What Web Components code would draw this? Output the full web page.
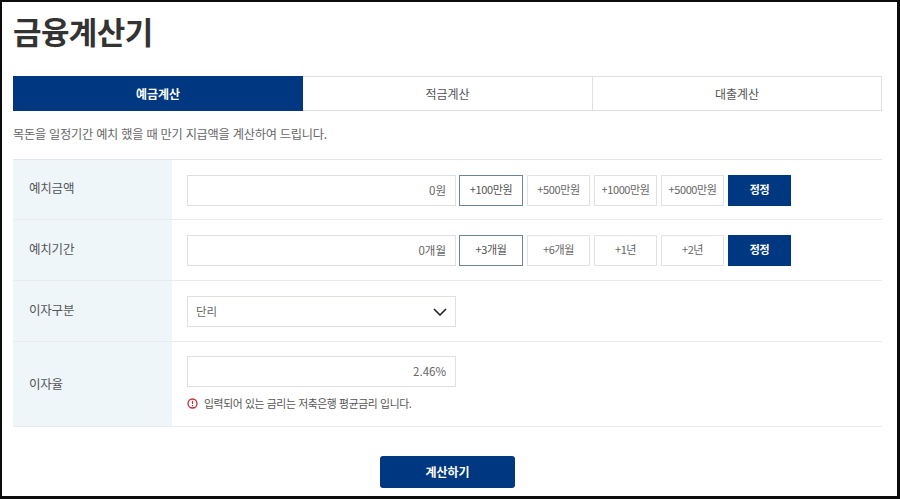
<!DOCTYPE html>
<html lang="ko"><head><meta charset="utf-8"><title>금융계산기</title>
<style>
html,body{margin:0;padding:0;background:#fff}
body{font-family:"Noto Sans CJK KR","Noto Sans",sans-serif}
</style></head><body>
<calc-page>
<calc-tabs slot="tabs"></calc-tabs>
<p slot="intro">목돈을 일정기간 예치 했을 때 만기 지급액을 계산하여 드립니다.</p>
<calc-row label="예치금액" h="59"><calc-input tight>0원</calc-input><calc-chip active>+100만원</calc-chip><calc-chip>+500만원</calc-chip><calc-chip>+1000만원</calc-chip><calc-chip>+5000만원</calc-chip><calc-chip primary>정정</calc-chip></calc-row>
<calc-row label="예치기간" h="60"><calc-input tight>0개월</calc-input><calc-chip active>+3개월</calc-chip><calc-chip>+6개월</calc-chip><calc-chip>+1년</calc-chip><calc-chip>+2년</calc-chip><calc-chip primary>정정</calc-chip></calc-row>
<calc-row label="이자구분" h="60"><calc-select>단리</calc-select></calc-row>
<calc-row label="이자율" h="84" stack><calc-input>2.46%</calc-input><calc-note>입력되어 있는 금리는 저축은행 평균금리 입니다.</calc-note></calc-row>
<calc-submit>계산하기</calc-submit>
</calc-page>
<script>
function def(name,css,html){
  customElements.define(name,class extends HTMLElement{
    connectedCallback(){
      if(this.shadowRoot)return;
      const r=this.attachShadow({mode:'open'});
      r.innerHTML='<style>'+css+'</style>'+(typeof html==='function'?html(this):html);
    }
  });
}
def('calc-page',`
:host{display:block;box-sizing:border-box;width:900px;height:499px;border:2px solid #0c0c0c;border-bottom-width:3px;border-right-width:3px;padding:0 15px 0 11px;overflow:hidden;color:#555;background:#fff}
h1{margin:0;height:74px;box-sizing:border-box;padding-top:8px;font-size:31px;line-height:42px;font-weight:700;color:#333;letter-spacing:-.6px}
::slotted(p){margin:0;height:48px;line-height:46px;font-size:12.2px;color:#666;letter-spacing:-.24px}
.tbl{border-top:1px solid #dfe5e8;display:block}
`,`<h1>금융계산기</h1><slot name="tabs"></slot><slot name="intro"></slot><div class="tbl"><slot></slot></div>`);
def('calc-tabs',`
:host{display:grid;grid-template-columns:290px 290px 1fr;height:35px;font-size:12px;letter-spacing:-.1px}
div{display:flex;align-items:center;justify-content:center;box-sizing:border-box;border:1px solid #dcdfe3;border-left:0;color:#555}
.on{background:#003781;border:0;color:#fff;font-weight:700}
`,`<div class="on">예금계산</div><div>적금계산</div><div>대출계산</div>`);
def('calc-row',`
:host{display:grid;grid-template-columns:159px 1fr;border-bottom:1px solid #e8ecee;font-size:12.5px}
.th{background:#eff6f9;display:flex;align-items:center;box-sizing:border-box;padding:0 0 4px 16px;color:#555;letter-spacing:-.2px}
:host([stack]) .th{padding-bottom:2px}
.td{display:flex;gap:4px;padding:15px 0 0 15px;box-sizing:border-box;align-items:flex-start}
.td.stack{flex-direction:column;gap:7px;padding-top:14px}
`,e=>`<div class="th" style="height:${e.getAttribute('h')}px">${e.getAttribute('label')}</div><div class="td ${e.hasAttribute('stack')?'stack':''}"><slot></slot></div>`);
def('calc-input',`
:host{display:flex;align-items:center;justify-content:flex-end;box-sizing:border-box;width:269px;height:31px;border:1px solid #dcdfe3;padding:0 9px 2px 0;font-size:11.5px;color:#666;background:#fff}
:host([tight]){margin-right:-1px}
`,`<slot></slot>`);
def('calc-chip',`
:host{display:flex;align-items:center;justify-content:center;box-sizing:border-box;width:63px;height:31px;padding-bottom:3px;border:1px solid #dfe2e6;font-size:11px;color:#666;letter-spacing:-.4px;background:#fff}
:host([active]){border-color:#6d8494;color:#555;width:64px}
:host([primary]){background:#003781;border-color:#003781;color:#fff;font-weight:700}
`,`<slot></slot>`);
def('calc-select',`
:host{display:flex;align-items:center;justify-content:space-between;box-sizing:border-box;width:269px;height:31px;border:1px solid #dcdfe3;padding:0 8px 0 8px;font-size:11.5px;color:#666;background:#fff}
span{padding-bottom:2px}
svg{display:block}
`,`<span><slot></slot></span><svg width="14" height="8" viewBox="0 0 14 8"><path d="M1 1l6 6 6-6" fill="none" stroke="#222" stroke-width="1.6"/></svg>`);
def('calc-note',`
:host{display:flex;align-items:center;gap:6px;font-size:10.8px;color:#555;letter-spacing:-.36px;height:16px;margin-top:1px}
svg{display:block;flex:none}
`,`<svg width="11" height="11" viewBox="0 0 11 11"><circle cx="5.5" cy="5.5" r="4.5" fill="none" stroke="#b8323c" stroke-width="1.3"/><path d="M5.5 2.8v3.2M5.5 7v1.2" stroke="#b8323c" stroke-width="1.2"/></svg><span><slot></slot></span>`);
def('calc-submit',`
:host{display:flex;align-items:center;justify-content:center;box-sizing:border-box;width:135px;height:32px;margin:29px 0 0 367px;border-radius:3px;background:#003781;color:#fff;font-size:12px;font-weight:700;padding-bottom:2px}
`,`<slot></slot>`);
</script>
</body></html>
